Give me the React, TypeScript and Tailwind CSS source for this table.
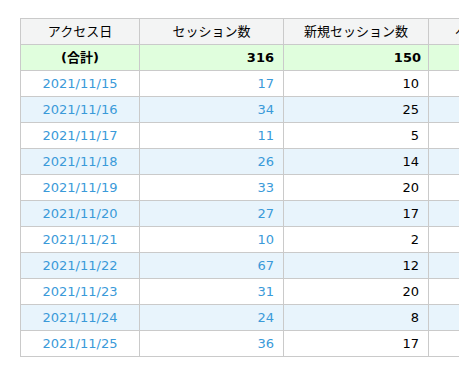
const rows = [
  ['2021/11/15', '17', '10'],
  ['2021/11/16', '34', '25'],
  ['2021/11/17', '11', '5'],
  ['2021/11/18', '26', '14'],
  ['2021/11/19', '33', '20'],
  ['2021/11/20', '27', '17'],
  ['2021/11/21', '10', '2'],
  ['2021/11/22', '67', '12'],
  ['2021/11/23', '31', '20'],
  ['2021/11/24', '24', '8'],
  ['2021/11/25', '36', '17'],
];

const font = { fontFamily: '"DejaVu Sans", "Noto Sans CJK JP", sans-serif' };

export default function App() {
  return (
    <div className="w-[459px] h-[378px] overflow-hidden bg-white pt-[18px] pl-[20px]" style={font}>
      <table className="border-collapse table-fixed w-[553px] text-[13px] text-black">
        <colgroup>
          <col className="w-[119px]" />
          <col className="w-[144px]" />
          <col className="w-[145px]" />
          <col className="w-[145px]" />
        </colgroup>
        <thead>
          <tr className="h-[26px] bg-[#f3f4f4]">
            <th className="border border-[#cacaca] font-normal text-center">アクセス日</th>
            <th className="border border-[#cacaca] font-normal text-center">セッション数</th>
            <th className="border border-[#cacaca] font-normal text-center">新規セッション数</th>
            <th className="border border-[#cacaca] font-normal text-left pl-[26px] whitespace-nowrap">ページビュー数</th>
          </tr>
        </thead>
        <tbody>
          <tr className="h-[26px] bg-[#e0fedd] font-bold">
            <td className="border border-[#cacaca] text-center">(合計)</td>
            <td className="border border-[#cacaca] text-right pr-[9px]">316</td>
            <td className="border border-[#cacaca] text-right pr-[7px]">150</td>
            <td className="border border-[#cacaca]"></td>
          </tr>
          {rows.map((r, i) => (
            <tr key={r[0]} className={i % 2 === 1 ? 'h-[26px] bg-[#e8f4fc]' : 'h-[26px] bg-white'}>
              <td className="border border-[#cacaca] text-center text-[#3a9ad9]">{r[0]}</td>
              <td className="border border-[#cacaca] text-right pr-[9px] text-[#3a9ad9]">{r[1]}</td>
              <td className="border border-[#cacaca] text-right pr-[9px]">{r[2]}</td>
              <td className="border border-[#cacaca]"></td>
            </tr>
          ))}
        </tbody>
      </table>
    </div>
  );
}
